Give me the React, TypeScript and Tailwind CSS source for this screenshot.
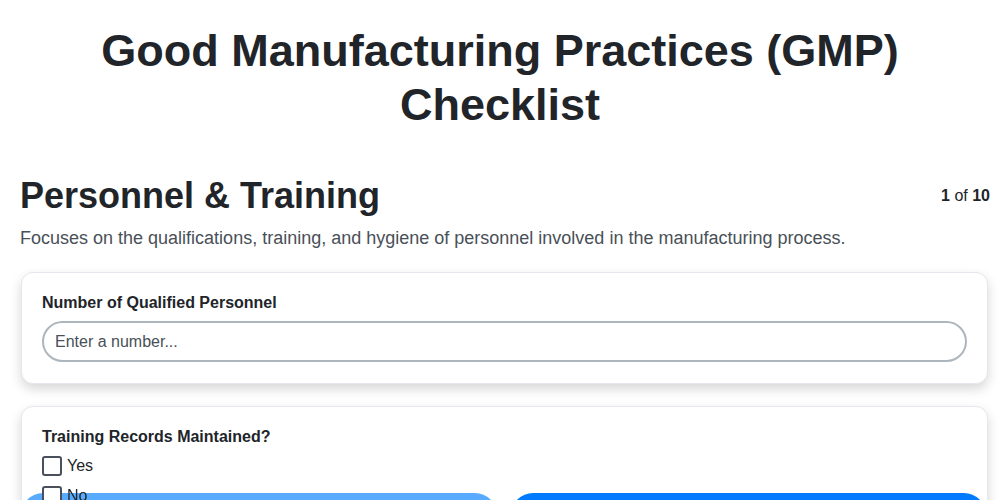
export default function App() {
  return (
    <div className="h-screen overflow-hidden bg-white font-['Liberation_Sans',Arial,sans-serif] text-[#212529]">
      <h1 className="px-5 pt-[24px] text-center text-[45px] font-bold leading-[1.2]">
        Good Manufacturing Practices (GMP)
        <br />
        Checklist
      </h1>

      <div className="pl-5 pr-[10px] pt-[42px]">
        <div className="flex items-center justify-between">
          <h2 className="text-[36px] font-bold leading-[1.2]">Personnel &amp; Training</h2>
          <div className="text-[16px]">
            <span className="font-bold">1</span> of <span className="font-bold">10</span>
          </div>
        </div>
        <p className="mt-[8px] text-[18px] leading-[1.5] text-[#495057]">
          Focuses on the qualifications, training, and hygiene of personnel involved in the
          manufacturing process.
        </p>

        <div className="mt-[20px] ml-[1px] mr-[2px] space-y-[22px]">
          <div className="rounded-xl border border-[#e6e6ee] bg-white px-[20px] pt-[20px] pb-[21px] shadow-[0_5px_12px_rgba(0,0,0,0.16)]">
            <label className="block text-[16px] font-bold leading-[1.2]">
              Number of Qualified Personnel
            </label>
            <input
              type="text"
              placeholder="Enter a number..."
              className="mt-[9px] h-[41px] w-full rounded-full border-2 border-[#adb5bd] px-[11px] text-[16px] text-[#212529] outline-none placeholder:text-[#495057]"
            />
          </div>

          <div className="rounded-xl border border-[#e6e6ee] bg-white px-[20px] pt-[20px] pb-[21px] shadow-[0_5px_12px_rgba(0,0,0,0.16)]">
            <label className="block text-[16px] font-bold leading-[1.2]">
              Training Records Maintained?
            </label>
            <div className="mt-[9px] space-y-[10px]">
              {["Yes", "No", "N/A"].map((opt) => (
                <label
                  key={opt}
                  className="relative z-10 flex items-center gap-[5px] text-[16px] leading-[20px]"
                >
                  <span className="inline-block h-[20px] w-[20px] rounded-[3px] border-2 border-[#4a4f5c] bg-white" />
                  {opt}
                </label>
              ))}
            </div>
          </div>
        </div>
      </div>

      <div className="fixed top-[493px] left-0 right-0 flex gap-[14px] pl-[21px] pr-[14px]">
        <button className="h-12 flex-1 rounded-[22px] bg-[#59abff] text-white">Previous</button>
        <button className="h-12 flex-1 rounded-[22px] bg-[#007bff] text-white">Next</button>
      </div>
    </div>
  );
}
